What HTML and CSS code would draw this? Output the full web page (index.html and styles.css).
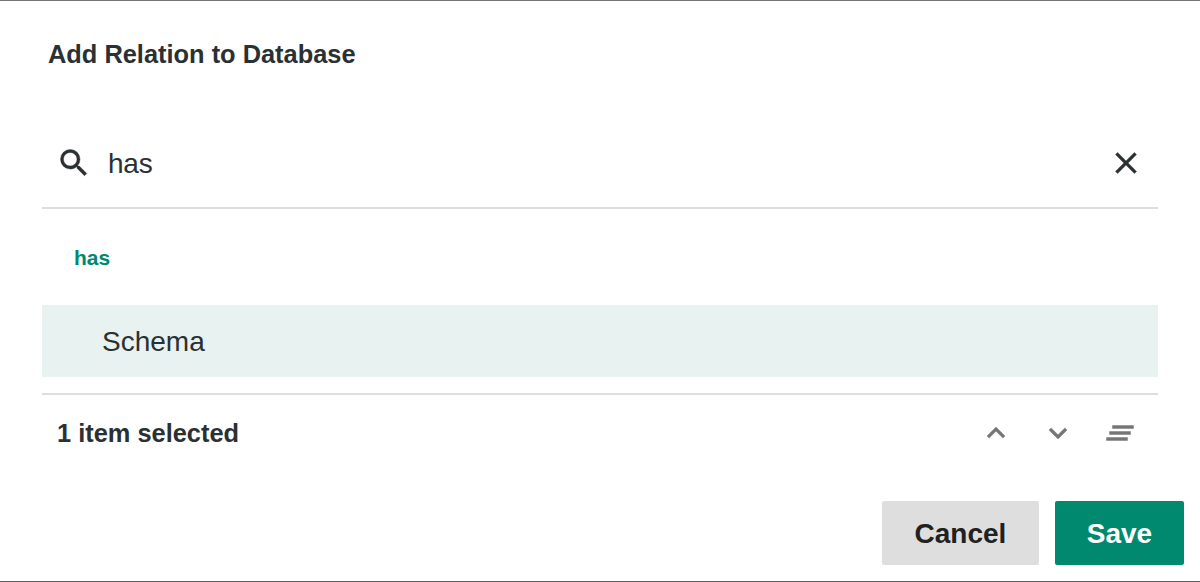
FILE: index.html
```html
<!DOCTYPE html>
<html lang="en">

<head>
    <meta charset="utf-8">
    <title>Add Relation to Database</title>
    <link rel="stylesheet" href="styles.css">
</head>

<body>
    <div class="dialog">
        <h2>Add Relation to Database</h2>
        <div class="search">
            <svg viewBox="0 0 24 24">
                <path d="M15.5 14h-.79l-.28-.27A6.471 6.471 0 0 0 16 9.5 6.5 6.5 0 1 0 9.5 16c1.61 0 3.09-.59 4.23-1.57l.27.28v.79l5 4.99L20.49 19l-4.99-5zm-6 0C7.01 14 5 11.99 5 9.5S7.01 5 9.5 5 14 7.01 14 9.5 11.99 14 9.5 14z" />
            </svg>
            <span class="query">has</span>
            <svg viewBox="0 0 24 24">
                <path d="M19 6.41L17.59 5 12 10.59 6.41 5 5 6.41 10.59 12 5 17.59 6.41 19 12 13.41 17.59 19 19 17.59 13.41 12z" />
            </svg>
        </div>
        <div class="group">has</div>
        <div class="item">Schema</div>
        <div class="status">
            <span class="count">1 item selected</span>
            <div class="tools">
                <svg viewBox="0 0 24 24">
                    <path d="M12 8l-6 6 1.41 1.41L12 10.83l4.59 4.58L18 14z" />
                </svg>
                <svg viewBox="0 0 24 24">
                    <path d="M16.59 8.59L12 13.17 7.41 8.59 6 10l6 6 6-6z" />
                </svg>
                <svg viewBox="0 0 24 24">
                    <path d="M5 13h14v-2H5v2zm-2 4h14v-2H3v2zM7 7v2h14V7H7z" />
                </svg>
            </div>
        </div>
        <div class="buttons">
            <button class="cancel">Cancel</button>
            <button class="save">Save</button>
        </div>
    </div>
</body>

</html>
```
FILE: styles.css
```css
* {
    box-sizing: border-box;
}

body {
    margin: 0;
    background: white;
    color: #2b3033;
    font-family: "Liberation Sans", Arial, sans-serif;
}

svg {
    width: 36px;
    height: 36px;
    fill: #2b3033;
    stroke: #2b3033;
    stroke-width: 0.3;
}

.dialog {
    height: 582px;
    padding: 0 42px;
    border-top: 1px solid #757575;
    border-bottom: 1px solid #606060;
}

h2 {
    height: 117px;
    margin: 0;
    padding: 38px 6px 0;
    font-size: 25.4px;
    line-height: 30px;
}

.search {
    display: flex;
    align-items: center;
    height: 91px;
    padding: 0 14px;
    border-bottom: 2px solid #dedede;
    font-size: 28px;
}

.query {
    flex: 1;
    padding-top: 2px;
    margin-left: 16px;
    letter-spacing: -0.2px;
}

.group {
    height: 96px;
    padding-left: 32px;
    color: #00896e;
    font-size: 21px;
    font-weight: bold;
    line-height: 98px;
}

.item {
    height: 72px;
    padding-left: 60px;
    background: #e8f2f0;
    font-size: 28px;
    line-height: 74px;
}

.status {
    display: flex;
    align-items: center;
    justify-content: space-between;
    height: 78px;
    margin-top: 16px;
    padding: 0 20px 0 15px;
    border-top: 2px solid #dedede;
}

.count {
    font-size: 25.4px;
    font-weight: bold;
}

.tools {
    display: flex;
    gap: 26px;
}

.tools svg {
    fill: #757575;
    stroke: #757575;
}

.buttons {
    display: flex;
    justify-content: flex-end;
    gap: 16px;
    margin: 30px -26px 0 0;
}

button {
    height: 64px;
    padding: 2px 0 0;
    border: none;
    border-radius: 2px;
    font-family: inherit;
    font-size: 28px;
    font-weight: bold;
}

.cancel {
    width: 157px;
    background: #dedede;
    color: #212121;
}

.save {
    width: 129px;
    background: #00896e;
    color: white;
}
```
